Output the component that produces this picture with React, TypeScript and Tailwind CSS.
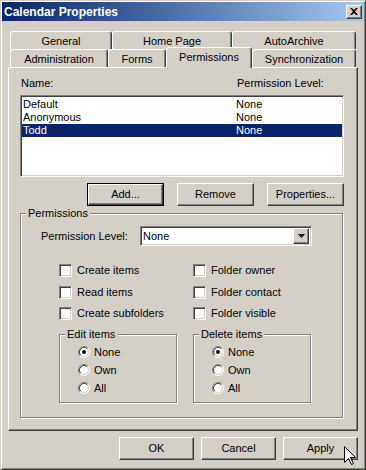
import type { ReactNode } from 'react';

const raised =
  'bg-[#D4D0C8] border border-t-white border-l-white border-r-[#404040] border-b-[#404040] shadow-[inset_-1px_-1px_0_#808080]';
const sunken =
  'border border-t-[#808080] border-l-[#808080] border-r-white border-b-white shadow-[inset_1px_1px_0_#404040,inset_-1px_-1px_0_#D4D0C8]';
const etched = 'relative border border-[#808080] shadow-[inset_1px_1px_0_#fff,1px_1px_0_#fff]';
const tabCls =
  'flex items-start justify-center pt-[3px] bg-[#D4D0C8] border-t border-l border-t-white border-l-white border-r border-r-[#404040] rounded-t-[3px] shadow-[inset_-1px_0_0_#808080]';

function Button({ label, cls, isDefault }: { label: string; cls: string; isDefault?: boolean }) {
  if (isDefault) {
    return (
      <div className={`${cls} h-[23px] border border-black flex`}>
        <div className={`${raised} flex-1 flex items-center justify-center`}>{label}</div>
      </div>
    );
  }
  return <div className={`${cls} h-[23px] ${raised} flex items-center justify-center`}>{label}</div>;
}

function Check({ label }: { label: string }) {
  return (
    <div className="flex items-center h-[13px] gap-[5px]">
      <div className={`w-[13px] h-[13px] bg-white ${sunken}`} />
      <span>{label}</span>
    </div>
  );
}

function Radio({ label, on }: { label: string; on?: boolean }) {
  return (
    <div className="flex items-center h-[12px] gap-[4px]">
      <svg width="12" height="12" viewBox="0 0 12 12">
        <circle cx="6" cy="6" r="5" fill="#fff" />
        <path d="M2.11 9.89 A5.5 5.5 0 0 1 9.89 2.11" fill="none" stroke="#808080" />
        <path d="M9.89 2.11 A5.5 5.5 0 0 1 2.11 9.89" fill="none" stroke="#fff" />
        <path d="M2.82 9.18 A4.5 4.5 0 0 1 9.18 2.82" fill="none" stroke="#404040" />
        <path d="M9.18 2.82 A4.5 4.5 0 0 1 2.82 9.18" fill="none" stroke="#D4D0C8" />
        {on && <circle cx="6" cy="6" r="2" fill="#000" />}
      </svg>
      <span>{label}</span>
    </div>
  );
}

function Group({ label, cls, children }: { label: string; cls: string; children: ReactNode }) {
  return (
    <div className={`${etched} ${cls}`}>
      <span className="absolute left-[5px] top-[-7px] px-[2px] bg-[#D4D0C8] leading-[13px]">{label}</span>
      {children}
    </div>
  );
}

function RadioSet({ label }: { label: string }) {
  return (
    <Group label={label} cls="w-[118px] h-[69px]">
      <div className="flex flex-col gap-[6px] pl-[18px] pt-[11px]">
        <Radio label="None" on />
        <Radio label="Own" />
        <Radio label="All" />
      </div>
    </Group>
  );
}

const users = [
  { name: 'Default', level: 'None' },
  { name: 'Anonymous', level: 'None' },
  { name: 'Todd', level: 'None', sel: true },
];

export default function App() {
  return (
    <div className="relative w-[366px] h-[470px] p-[1px] bg-[#D4D0C8] border border-t-[#D4D0C8] border-l-[#D4D0C8] border-r-[#404040] border-b-[#404040] shadow-[inset_1px_1px_0_#fff,inset_-1px_-1px_0_#808080] font-['Liberation_Sans',Arial,sans-serif] text-[11px] leading-[13px] text-black overflow-hidden select-none">
      {/* Title bar */}
      <div className="h-[19px] flex items-center justify-between pl-[2px] pr-[2px] bg-gradient-to-r from-[#0A246A] to-[#A6CAF0]">
        <span className="text-white font-bold text-[12px] leading-[14px]">Calendar Properties</span>
        <div className={`w-[16px] h-[14px] ${raised} flex items-center justify-center`}>
          <svg width="8" height="7" viewBox="0 0 8 7">
            <path d="M0 0 L2 0 L4 2 L6 0 L8 0 L5 3.5 L8 7 L6 7 L4 5 L2 7 L0 7 L3 3.5 Z" fill="#000" />
          </svg>
        </div>
      </div>

      {/* Tabs */}
      <div className="mt-[10px] ml-[8px] flex h-[18px]">
        <div className={`${tabCls} w-[102px] h-[18px]`}>General</div>
        <div className={`${tabCls} w-[120px] h-[18px]`}>Home Page</div>
        <div className={`${tabCls} w-[124px] h-[18px]`}>AutoArchive</div>
      </div>
      <div className="ml-[8px] flex items-start h-[18px]">
        <div className={`${tabCls} w-[98px] h-[18px]`}>Administration</div>
        <div className={`${tabCls} w-[58px] h-[18px]`}>Forms</div>
        <div className={`${tabCls} relative z-10 w-[86px] h-[21px] -mt-[2px]`}>Permissions</div>
        <div className={`${tabCls} w-[104px] h-[18px]`}>Synchronization</div>
      </div>

      {/* Tab panel */}
      <div className="ml-[6px] w-[350px] h-[364px] bg-[#D4D0C8] border border-t-white border-l-white border-r-[#404040] border-b-[#404040] shadow-[inset_-1px_-1px_0_#808080]">
        <div className="pl-[11px] pt-[9px] w-[335px]">
          <div className="flex h-[13px]">
            <span className="w-[217px] pl-[1px]">Name:</span>
            <span>Permission Level:</span>
          </div>

          <div className={`mt-[5px] h-[82px] bg-white ${sunken} p-[1px] pt-[2px]`}>
            {users.map(u => (
              <div key={u.name} className={`flex h-[13px] ${u.sel ? 'bg-[#0A246A] text-white' : ''}`}>
                <span className="w-[214px] pl-[1px]">{u.name}</span>
                <span>{u.level}</span>
              </div>
            ))}
          </div>

          <div className="mt-[6px] flex justify-end gap-[13px]">
            <Button label="Add..." cls="w-[77px]" isDefault />
            <Button label="Remove" cls="w-[77px]" />
            <Button label="Properties..." cls="w-[77px]" />
          </div>

          <Group label="Permissions" cls="mt-[7px] w-[323px] h-[205px]">
            <div className="pt-[12px] pl-[20px] flex items-center">
              <span className="w-[99px]">Permission Level:</span>
              <div className={`w-[172px] h-[20px] bg-white ${sunken} flex items-center justify-between pl-[2px] pr-[2px]`}>
                <span>None</span>
                <div className={`w-[16px] h-[16px] ${raised} flex items-center justify-center`}>
                  <svg width="7" height="4" viewBox="0 0 7 4">
                    <path d="M0 0 L7 0 L3.5 4 Z" fill="#000" />
                  </svg>
                </div>
              </div>
            </div>

            <div className="mt-[18px] pl-[38px] flex">
              <div className="w-[134px]">
                <Check label="Create items" />
                <div className="mt-[9px]"><Check label="Read items" /></div>
                <div className="mt-[8px]"><Check label="Create subfolders" /></div>
              </div>
              <div>
                <Check label="Folder owner" />
                <div className="mt-[9px]"><Check label="Folder contact" /></div>
                <div className="mt-[8px]"><Check label="Folder visible" /></div>
              </div>
            </div>

            <div className="mt-[14px] pl-[38px] flex gap-[16px]">
              <RadioSet label="Edit items" />
              <RadioSet label="Delete items" />
            </div>
          </Group>
        </div>
      </div>

      {/* Dialog buttons */}
      <div className="mt-[6px] pr-[6px] flex justify-end gap-[7px]">
        <Button label="OK" cls="w-[75px]" />
        <Button label="Cancel" cls="w-[75px]" />
        <Button label="Apply" cls="w-[75px]" />
      </div>

      {/* Mouse pointer over Apply */}
      <svg className="absolute left-[343px] top-[445px]" width="13" height="20" viewBox="0 0 13 20">
        <path d="M0.5 0.5 L0.5 16.5 L4.5 12.5 L7.5 18.5 L9.5 17.5 L6.5 11.5 L11.5 11.5 Z" fill="#fff" stroke="#000" strokeLinejoin="miter" />
      </svg>
    </div>
  );
}
